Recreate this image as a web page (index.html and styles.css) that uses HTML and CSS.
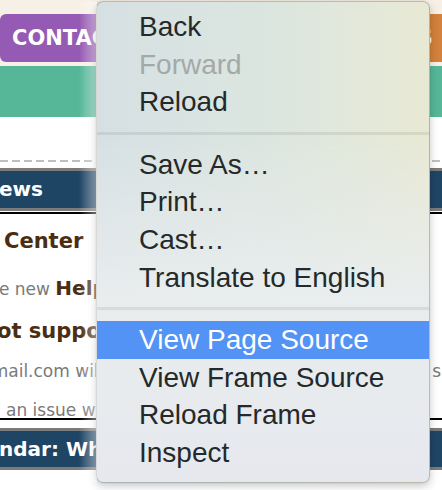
FILE: index.html
```html
<!DOCTYPE html>
<html lang="en">
<head>
<meta charset="utf-8">
<title>Context menu</title>
<link rel="stylesheet" href="styles.css">
</head>
<body>
<div class="page">
  <header class="top">
    <nav class="nav">
      <a class="btn btn-purple" href="#">CONTACT US</a>
      <a class="btn btn-orange" href="#">EVENTS</a>
    </nav>
  </header>
  <div class="band"></div>
  <div class="gap"></div>
  <div class="dash"></div>
  <h2 class="bar bar-news">News</h2>
  <div class="box">
    <p class="line l1"><b class="strong">Center</b></p>
    <p class="line l2"><span class="muted">the new </span><b class="strong">Help Center</b></p>
    <p class="line l3"><b class="strong">not supported</b></p>
    <p class="line l4"><span class="muted">gmail.com will</span><span class="muted tail">s</span></p>
    <p class="line l5"><span class="muted">an issue with</span></p>
  </div>
  <h2 class="bar bar-cal">Calendar: What's On</h2>
</div>

<div class="menu">
  <div class="item">Back</div>
  <div class="item off">Forward</div>
  <div class="item">Reload</div>
  <div class="sep"></div>
  <div class="item">Save As…</div>
  <div class="item">Print…</div>
  <div class="item">Cast…</div>
  <div class="item">Translate to English</div>
  <div class="sep"></div>
  <div class="item on">View Page Source</div>
  <div class="item">View Frame Source</div>
  <div class="item">Reload Frame</div>
  <div class="item">Inspect</div>
</div>
</body>
</html>
```

FILE: styles.css
```css
html, body {
  margin: 0;
  padding: 0;
}
body {
  width: 442px;
  height: 490px;
  overflow: hidden;
  position: relative;
  background: #ffffff;
  font-family: "DejaVu Sans", Verdana, sans-serif;
}

.page {
  width: 442px;
}

/* top nav */
.top {
  background: #f7f0e6;
  height: 66px;
  padding-top: 14px;
  box-sizing: border-box;
}
.nav {
  display: flex;
  justify-content: space-between;
  height: 48px;
}
.btn {
  color: #ffffff;
  font-weight: bold;
  font-size: 21px;
  line-height: 48px;
  text-decoration: none;
  white-space: nowrap;
  border-radius: 6px;
}
.btn-purple {
  background: #955ab3;
  padding: 0 20px 0 12px;
}
.btn-orange {
  background: #d3813b;
  padding: 0 19px 0 16px;
  margin-right: -10px;
}

.band {
  background: #56b798;
  height: 51px;
}
.gap {
  height: 43px;
}
.dash {
  height: 2px;
  background: repeating-linear-gradient(90deg, #bfbfbf 0 8px, transparent 8px 12px);
}

/* section bars */
.bar {
  margin: 0;
  background: #1f4565;
  border-top: 3px solid #7b7b7b;
  border-bottom: 3px solid #7b7b7b;
  color: #ffffff;
  font-size: 20px;
  font-weight: bold;
  white-space: nowrap;
  overflow: hidden;
}
.bar-news {
  margin-top: 6px;
  margin-bottom: 1px;
  height: 37px;
  line-height: 37px;
  text-indent: -17.7px;
}
.bar-cal {
  margin-top: 8px;
  height: 36px;
  line-height: 36px;
  text-indent: -49.6px;
}

/* content box */
.box {
  border-top: 2px solid #000000;
  border-bottom: 2px solid #000000;
  height: 208px;
  box-sizing: border-box;
  padding-top: 16px;
}
.line {
  margin: 0;
  white-space: nowrap;
  line-height: 22px;
}
.strong {
  color: #4b2d12;
  font-weight: bold;
}
.muted {
  color: #7a7a7a;
  font-weight: normal;
}
.l1 {
  font-size: 21px;
  padding-left: 4px;
}
.l2 {
  margin-top: 25px;
  font-size: 20px;
  text-indent: -18.5px;
}
.l2 .muted {
  font-size: 17px;
  line-height: 1;
}
.l3 {
  margin-top: 21px;
  font-size: 21px;
  text-indent: -18px;
}
.l4 {
  margin-top: 18px;
  font-size: 17px;
  display: flex;
  justify-content: space-between;
}
.l4 .muted:first-child {
  margin-left: -19.1px;
}
.l4 .tail {
  padding-right: 1px;
}
.l5 {
  margin-top: 17px;
  font-size: 17px;
  padding-left: 6px;
}

/* context menu */
.menu {
  position: absolute;
  left: 96px;
  top: 1px;
  width: 334px;
  box-sizing: border-box;
  border: 1px solid rgba(0, 0, 0, 0.2);
  border-radius: 7px;
  padding: 6px 0 10px;
  font-family: "Liberation Sans", Arial, sans-serif;
  font-size: 28px;
  color: #24292a;
  background:
    linear-gradient(180deg, rgba(232, 236, 238, 0) 0%, rgba(232, 236, 238, 0) 28%, rgba(233, 237, 238, 1) 62%, #e6e8ee 100%),
    linear-gradient(90deg, #d6e0e4 0%, #dce6df 55%, #e8e9d4 100%);
  box-shadow: 0 3px 9px rgba(0, 0, 0, 0.22), -1px 0 2px rgba(0, 0, 0, 0.08);
}
.menu::before {
  content: "";
  position: absolute;
  top: 0;
  bottom: 0;
  right: 100%;
  width: 18px;
  background: linear-gradient(90deg, rgba(255, 255, 255, 0), rgba(255, 255, 255, 0.45));
}
.item {
  height: 37.7px;
  line-height: 37.7px;
  padding-left: 42px;
  white-space: nowrap;
}
.item.off {
  color: #a3a9a7;
}
.item.on {
  background: #5293f5;
  color: #ffffff;
}
.sep {
  height: 3px;
  margin: 10.5px 0 11px;
  background: rgba(0, 0, 0, 0.075);
}
```
